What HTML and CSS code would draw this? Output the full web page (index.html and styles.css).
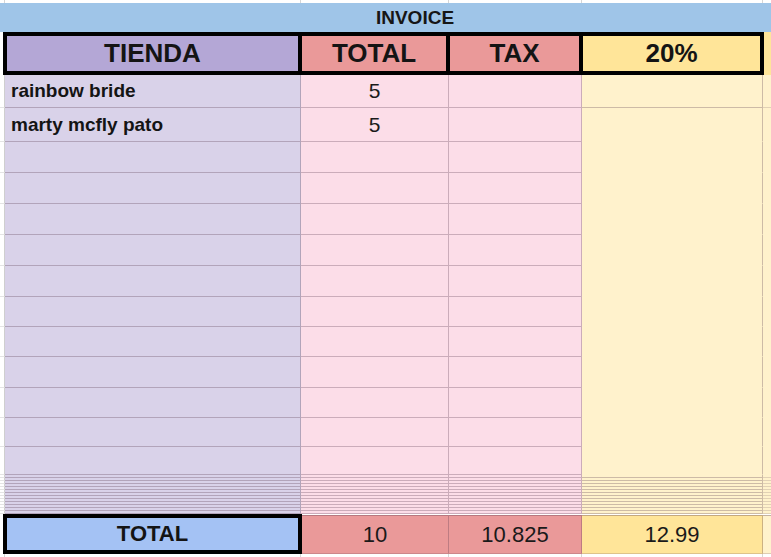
FILE: index.html
```html
<!DOCTYPE html>
<html>
<head>
<meta charset="utf-8">
<link rel="stylesheet" href="styles.css">
</head>
<body>
<div class="sheet">
  <div class="row top">
    <div class="cell w0 plain"></div><div class="cell wa plain"></div><div class="cell wb plain"></div><div class="cell wc plain"></div><div class="cell wd plain"></div><div class="cell we plain-last"></div>
  </div>
  <div class="invoice">INVOICE</div>
  <div class="row head">
    <div class="hpad"></div>
    <div class="hcell ha">TIENDA</div>
    <div class="hcell hb">TOTAL</div>
    <div class="hcell hc">TAX</div>
    <div class="hcell hd">20%</div>
    <div class="he"></div>
  </div>

  <div class="row h33 lined-d">
    <div class="cell w0 side"></div><div class="cell wa ca name">rainbow bride</div><div class="cell wb cb num">5</div><div class="cell wc cc"></div><div class="cell wd cd"></div><div class="cell we ce"></div>
  </div>
  <div class="row h34">
    <div class="cell w0 side"></div><div class="cell wa ca name">marty mcfly pato</div><div class="cell wb cb num">5</div><div class="cell wc cc"></div><div class="cell wd cd"></div><div class="cell we ce"></div>
  </div>
  <div class="row h31"><div class="cell w0 side"></div><div class="cell wa ca"></div><div class="cell wb cb"></div><div class="cell wc cc"></div><div class="cell wd cd"></div><div class="cell we ce"></div></div>
  <div class="row h31"><div class="cell w0 side"></div><div class="cell wa ca"></div><div class="cell wb cb"></div><div class="cell wc cc"></div><div class="cell wd cd"></div><div class="cell we ce"></div></div>
  <div class="row h31"><div class="cell w0 side"></div><div class="cell wa ca"></div><div class="cell wb cb"></div><div class="cell wc cc"></div><div class="cell wd cd"></div><div class="cell we ce"></div></div>
  <div class="row h31"><div class="cell w0 side"></div><div class="cell wa ca"></div><div class="cell wb cb"></div><div class="cell wc cc"></div><div class="cell wd cd"></div><div class="cell we ce"></div></div>
  <div class="row h31"><div class="cell w0 side"></div><div class="cell wa ca"></div><div class="cell wb cb"></div><div class="cell wc cc"></div><div class="cell wd cd"></div><div class="cell we ce"></div></div>
  <div class="row h30"><div class="cell w0 side"></div><div class="cell wa ca"></div><div class="cell wb cb"></div><div class="cell wc cc"></div><div class="cell wd cd"></div><div class="cell we ce"></div></div>
  <div class="row h30"><div class="cell w0 side"></div><div class="cell wa ca"></div><div class="cell wb cb"></div><div class="cell wc cc"></div><div class="cell wd cd"></div><div class="cell we ce"></div></div>
  <div class="row h31"><div class="cell w0 side"></div><div class="cell wa ca"></div><div class="cell wb cb"></div><div class="cell wc cc"></div><div class="cell wd cd"></div><div class="cell we ce"></div></div>
  <div class="row h30"><div class="cell w0 side"></div><div class="cell wa ca"></div><div class="cell wb cb"></div><div class="cell wc cc"></div><div class="cell wd cd"></div><div class="cell we ce"></div></div>
  <div class="row h29"><div class="cell w0 side"></div><div class="cell wa ca"></div><div class="cell wb cb"></div><div class="cell wc cc"></div><div class="cell wd cd"></div><div class="cell we ce"></div></div>
  <div class="row h28"><div class="cell w0 side"></div><div class="cell wa ca"></div><div class="cell wb cb"></div><div class="cell wc cc"></div><div class="cell wd cd"></div><div class="cell we ce"></div></div>

  <div class="thin">
    <div class="row h3 lined-d"><div class="cell w0 side"></div><div class="cell wa ca"></div><div class="cell wb cb"></div><div class="cell wc cc"></div><div class="cell wd cd"></div><div class="cell we ce"></div></div>
    <div class="row h3 lined-d"><div class="cell w0 side"></div><div class="cell wa ca"></div><div class="cell wb cb"></div><div class="cell wc cc"></div><div class="cell wd cd"></div><div class="cell we ce"></div></div>
    <div class="row h3 lined-d"><div class="cell w0 side"></div><div class="cell wa ca"></div><div class="cell wb cb"></div><div class="cell wc cc"></div><div class="cell wd cd"></div><div class="cell we ce"></div></div>
    <div class="row h3 lined-d"><div class="cell w0 side"></div><div class="cell wa ca"></div><div class="cell wb cb"></div><div class="cell wc cc"></div><div class="cell wd cd"></div><div class="cell we ce"></div></div>
    <div class="row h3 lined-d"><div class="cell w0 side"></div><div class="cell wa ca"></div><div class="cell wb cb"></div><div class="cell wc cc"></div><div class="cell wd cd"></div><div class="cell we ce"></div></div>
    <div class="row h3 lined-d"><div class="cell w0 side"></div><div class="cell wa ca"></div><div class="cell wb cb"></div><div class="cell wc cc"></div><div class="cell wd cd"></div><div class="cell we ce"></div></div>
    <div class="row h3 lined-d"><div class="cell w0 side"></div><div class="cell wa ca"></div><div class="cell wb cb"></div><div class="cell wc cc"></div><div class="cell wd cd"></div><div class="cell we ce"></div></div>
    <div class="row h3 lined-d"><div class="cell w0 side"></div><div class="cell wa ca"></div><div class="cell wb cb"></div><div class="cell wc cc"></div><div class="cell wd cd"></div><div class="cell we ce"></div></div>
    <div class="row h3 lined-d"><div class="cell w0 side"></div><div class="cell wa ca"></div><div class="cell wb cb"></div><div class="cell wc cc"></div><div class="cell wd cd"></div><div class="cell we ce"></div></div>
    <div class="row h3 lined-d"><div class="cell w0 side"></div><div class="cell wa ca"></div><div class="cell wb cb"></div><div class="cell wc cc"></div><div class="cell wd cd"></div><div class="cell we ce"></div></div>
    <div class="row h3 lined-d"><div class="cell w0 side"></div><div class="cell wa ca"></div><div class="cell wb cb"></div><div class="cell wc cc"></div><div class="cell wd cd"></div><div class="cell we ce"></div></div>
    <div class="row h3 lined-d"><div class="cell w0 side"></div><div class="cell wa ca"></div><div class="cell wb cb"></div><div class="cell wc cc"></div><div class="cell wd cd"></div><div class="cell we ce"></div></div>
    <div class="row h3 lined-d"><div class="cell w0 side"></div><div class="cell wa ca"></div><div class="cell wb cb"></div><div class="cell wc cc"></div><div class="cell wd cd"></div><div class="cell we ce"></div></div>
  </div>

  <div class="row foot">
    <div class="hpad"></div>
    <div class="fa">TOTAL</div>
    <div class="fcell fb">10</div>
    <div class="fcell fc">10.825</div>
    <div class="fcell fd">12.99</div>
    <div class="fcell fe"></div>
  </div>
  <div class="row bottom">
    <div class="cell w0 plain"></div><div class="cell wa plain"></div><div class="cell wb plain"></div><div class="cell wc plain"></div><div class="cell wd plain"></div><div class="cell we plain-last"></div>
  </div>
</div>
</body>
</html>
```

FILE: styles.css
```css
* { box-sizing: border-box; }

body {
  margin: 0;
  overflow: hidden;
  background: #ffffff;
  font-family: "Liberation Sans", Arial, sans-serif;
  color: #111;
}

.sheet {
  width: 771px;
  display: flex;
  flex-direction: column;
}

.row {
  display: flex;
  flex: none;
}

.cell {
  flex: none;
  height: 100%;
  display: flex;
  align-items: center;
  border-right: 1px solid rgba(90, 60, 80, 0.3);
  border-bottom: 1px solid rgba(90, 60, 80, 0.3);
}

.w0 { width: 5px; }
.wa { width: 296px; }
.wb { width: 148px; }
.wc { width: 133px; }
.wd { width: 181px; }
.we { flex: 1; border-right: none; }

/* white strips */
.top { height: 3px; }
.bottom { height: 3px; }
.plain, .plain-last {
  border-bottom: none;
  border-right-color: #d6d6d6;
  background: #fff;
}
.plain-last { border-right: none; }

/* title band (merged cell runs past the right edge, so its text sits right of centre) */
.invoice {
  height: 29px;
  background: #9fc5e8;
  display: flex;
  align-items: center;
  justify-content: center;
  padding-left: 59px;
  font-weight: bold;
  font-size: 19px;
  color: #161616;
}

/* header row */
.head { height: 43px; }
.hpad { width: 3px; flex: none; background: #fff; }
.hcell {
  flex: none;
  height: 43px;
  border: 4px solid #000;
  display: flex;
  align-items: center;
  justify-content: center;
  font-weight: bold;
  font-size: 26px;
  color: #141414;
}
.ha { width: 299px; background: #b4a7d6; }
.hb { width: 152px; margin-left: -4px; background: #ea9999; }
.hc { width: 137px; margin-left: -4px; background: #ea9999; }
.hd { width: 185px; margin-left: -4px; background: #ffe599; }
.he { flex: 1; background: #ffe599; }

/* data rows */
.h33 { height: 33px; }
.h34 { height: 34px; }
.h31 { height: 31px; }
.h30 { height: 30px; }
.h29 { height: 29px; }
.h28 { height: 28px; }
.h3 { height: 3px; }

.side {
  background: #fff;
  border-right-color: #cfcfcf;
  border-bottom-color: #e4e4e4;
}
.ca { background: #d9d2e9; }
.cb { background: #fcdde8; }
.cc { background: #fcdde8; }
.cd { background: #fff2cc; border-bottom-color: transparent; }
.ce { background: #fff2cc; border-bottom-color: transparent; }
.lined-d .cd { border-bottom-color: rgba(90, 60, 80, 0.3); }
.lined-d .ce { border-bottom-color: rgba(90, 60, 80, 0.18); }

.name {
  padding-left: 6px;
  font-weight: bold;
  font-size: 19px;
  color: #141414;
}
.num {
  justify-content: center;
  font-size: 21px;
  color: #1a1a1a;
}

.thin { display: flex; flex-direction: column; }

/* footer */
.foot { height: 40px; }
.fa {
  flex: none;
  width: 299px;
  height: 40px;
  border: 4px solid #000;
  background: #a4c2f4;
  display: flex;
  align-items: center;
  justify-content: center;
  font-weight: bold;
  font-size: 22px;
  color: #141414;
}
.fcell {
  flex: none;
  height: 39px;
  margin-top: 1px;
  display: flex;
  align-items: center;
  justify-content: center;
  font-size: 22px;
  color: #1a1a1a;
  border-top: 1px solid rgba(90, 60, 80, 0.35);
  border-right: 1px solid rgba(90, 60, 80, 0.3);
  border-bottom: 1px solid rgba(90, 60, 80, 0.2);
}
.fb { width: 147px; background: #ea9999; }
.fc { width: 133px; background: #ea9999; }
.fd { width: 181px; background: #ffe599; }
.fe { flex: 1; border-right: none; background: #fff2cc; }
```
